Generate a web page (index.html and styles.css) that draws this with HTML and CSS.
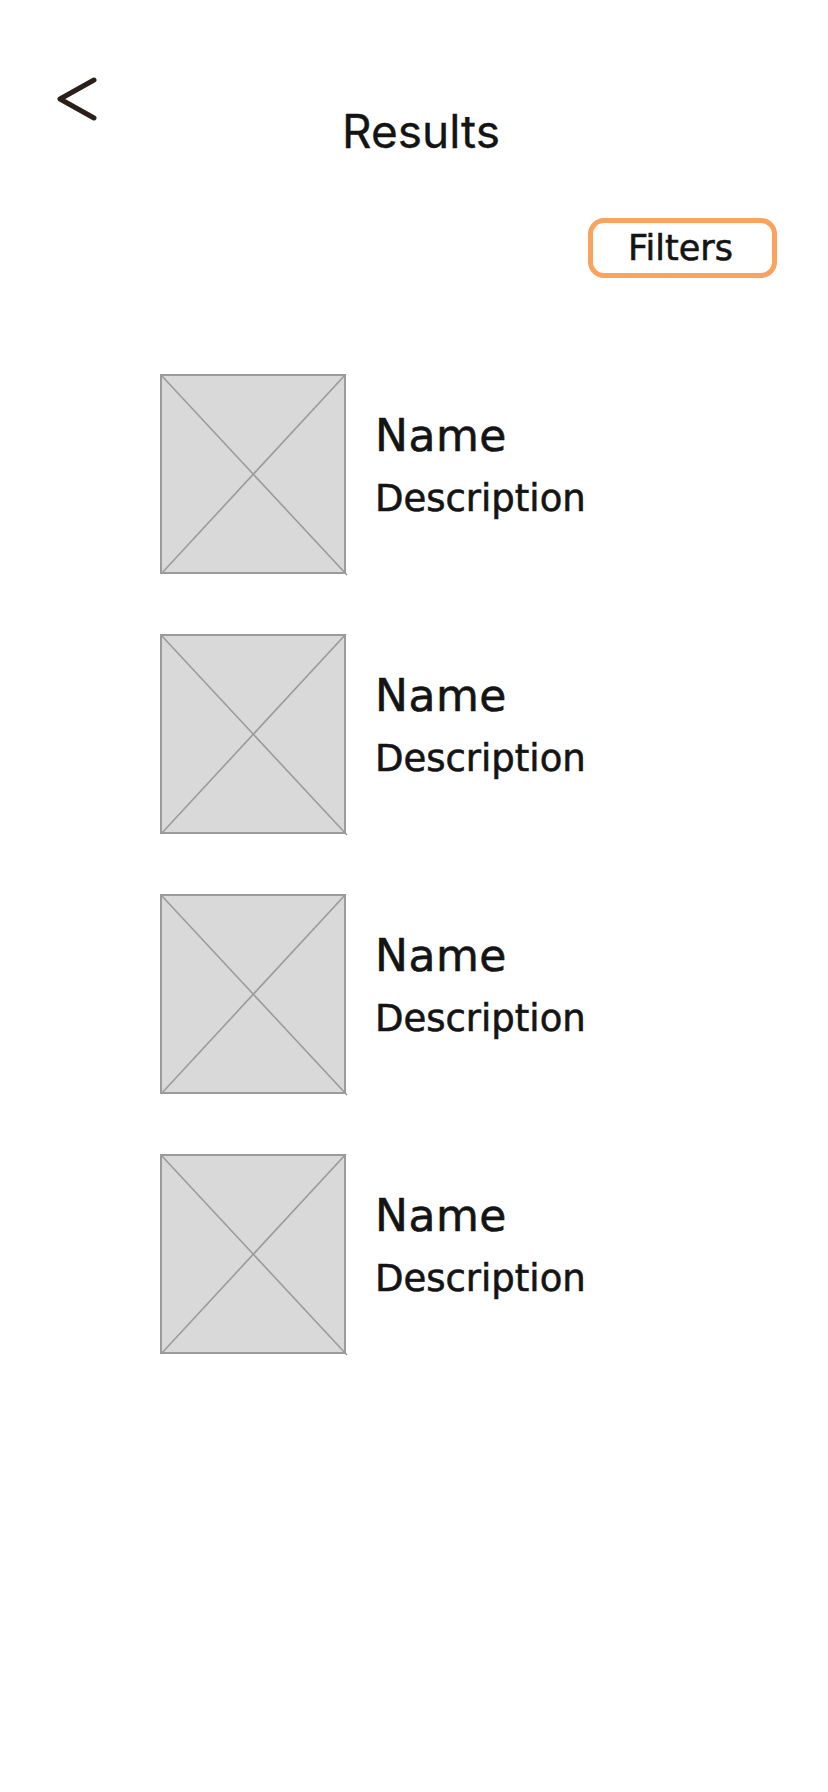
FILE: index.html
```html
<!DOCTYPE html>
<html lang="en">
<head>
    <meta charset="UTF-8">
    <meta name="viewport" content="width=device-width, initial-scale=1.0">
    <title>Results</title>
    <link rel="stylesheet" href="styles.css">
</head>
<body>

    <div class="header">
        <button class="back" aria-label="Back">
            <svg width="46" height="50" viewBox="0 0 46 50">
                <path d="M39 6 L5 25 L39 44" fill="none" stroke="#2b1f1a" stroke-width="5" stroke-linecap="round" stroke-linejoin="round"/>
            </svg>
        </button>
        <h1 class="title">Results</h1>
        <div></div>
    </div>

    <div class="toolbar">
        <button class="filters">Filters</button>
    </div>

    <div class="list">
        <div class="item">
            <svg class="thumb" width="188" height="202" viewBox="0 0 188 202">
                <rect x="1" y="1" width="184" height="198" fill="#d9d9d9" stroke="#9b9b9b" stroke-width="2"/>
                <line x1="1" y1="1" x2="187" y2="201" stroke="#9b9b9b" stroke-width="1.6"/>
                <line x1="186" y1="0" x2="1" y2="200" stroke="#9b9b9b" stroke-width="1.6"/>
            </svg>
            <div class="info">
                <div class="name">Name</div>
                <div class="desc">Description</div>
            </div>
        </div>
        <div class="item">
            <svg class="thumb" width="188" height="202" viewBox="0 0 188 202">
                <rect x="1" y="1" width="184" height="198" fill="#d9d9d9" stroke="#9b9b9b" stroke-width="2"/>
                <line x1="1" y1="1" x2="187" y2="201" stroke="#9b9b9b" stroke-width="1.6"/>
                <line x1="186" y1="0" x2="1" y2="200" stroke="#9b9b9b" stroke-width="1.6"/>
            </svg>
            <div class="info">
                <div class="name">Name</div>
                <div class="desc">Description</div>
            </div>
        </div>
        <div class="item">
            <svg class="thumb" width="188" height="202" viewBox="0 0 188 202">
                <rect x="1" y="1" width="184" height="198" fill="#d9d9d9" stroke="#9b9b9b" stroke-width="2"/>
                <line x1="1" y1="1" x2="187" y2="201" stroke="#9b9b9b" stroke-width="1.6"/>
                <line x1="186" y1="0" x2="1" y2="200" stroke="#9b9b9b" stroke-width="1.6"/>
            </svg>
            <div class="info">
                <div class="name">Name</div>
                <div class="desc">Description</div>
            </div>
        </div>
        <div class="item">
            <svg class="thumb" width="188" height="202" viewBox="0 0 188 202">
                <rect x="1" y="1" width="184" height="198" fill="#d9d9d9" stroke="#9b9b9b" stroke-width="2"/>
                <line x1="1" y1="1" x2="187" y2="201" stroke="#9b9b9b" stroke-width="1.6"/>
                <line x1="186" y1="0" x2="1" y2="200" stroke="#9b9b9b" stroke-width="1.6"/>
            </svg>
            <div class="info">
                <div class="name">Name</div>
                <div class="desc">Description</div>
            </div>
        </div>
    </div>

</body>
</html>
```

FILE: styles.css
```css
body{
    margin:0;
    padding:0;
    background-color: #ffffff;
    color: #141414;
    font-family: "DejaVu Sans", sans-serif;
}

.header{
    display: grid;
    grid-template-columns: 1fr auto 1fr;
    align-items: start;
    padding-top: 74px;
}
.back{
    justify-self: start;
    margin-left: 55px;
    padding: 0;
    border: none;
    background: none;
    cursor: pointer;
    line-height: 0;
}
.title{
    margin: 30px 0 0 0;
    padding-left: 14px;
    font-family: "Inter", sans-serif;
    font-size: 46px;
    line-height: 54px;
    font-weight: 400;
    color: #141414;
    -webkit-text-stroke: 0.3px #141414;
}

.toolbar{
    display: flex;
    justify-content: flex-end;
    padding-right: 51px;
    margin-top: 60px;
}
.filters{
    width: 189px;
    height: 60px;
    border: 5px solid #fba25e;
    border-radius: 16px;
    background: #ffffff;
    font-family: "DejaVu Sans", sans-serif;
    font-size: 35px;
    color: #141414;
    padding: 0 4px 0 0;
    cursor: pointer;
    -webkit-text-stroke: 0.6px #141414;
}

.list{
    display: flex;
    flex-direction: column;
    gap: 58px;
    padding-left: 160px;
    margin-top: 96px;
}
.item{
    display: flex;
    align-items: flex-start;
    gap: 27px;
}
.thumb{
    display: block;
    flex-shrink: 0;
}
.info{
    padding-top: 37px;
}
.name{
    font-size: 44px;
    line-height: 50px;
    letter-spacing: 0.5px;
    -webkit-text-stroke: 0.6px #141414;
}
.desc{
    margin-top: 13px;
    font-size: 37px;
    line-height: 50px;
    -webkit-text-stroke: 0.6px #141414;
}
```
